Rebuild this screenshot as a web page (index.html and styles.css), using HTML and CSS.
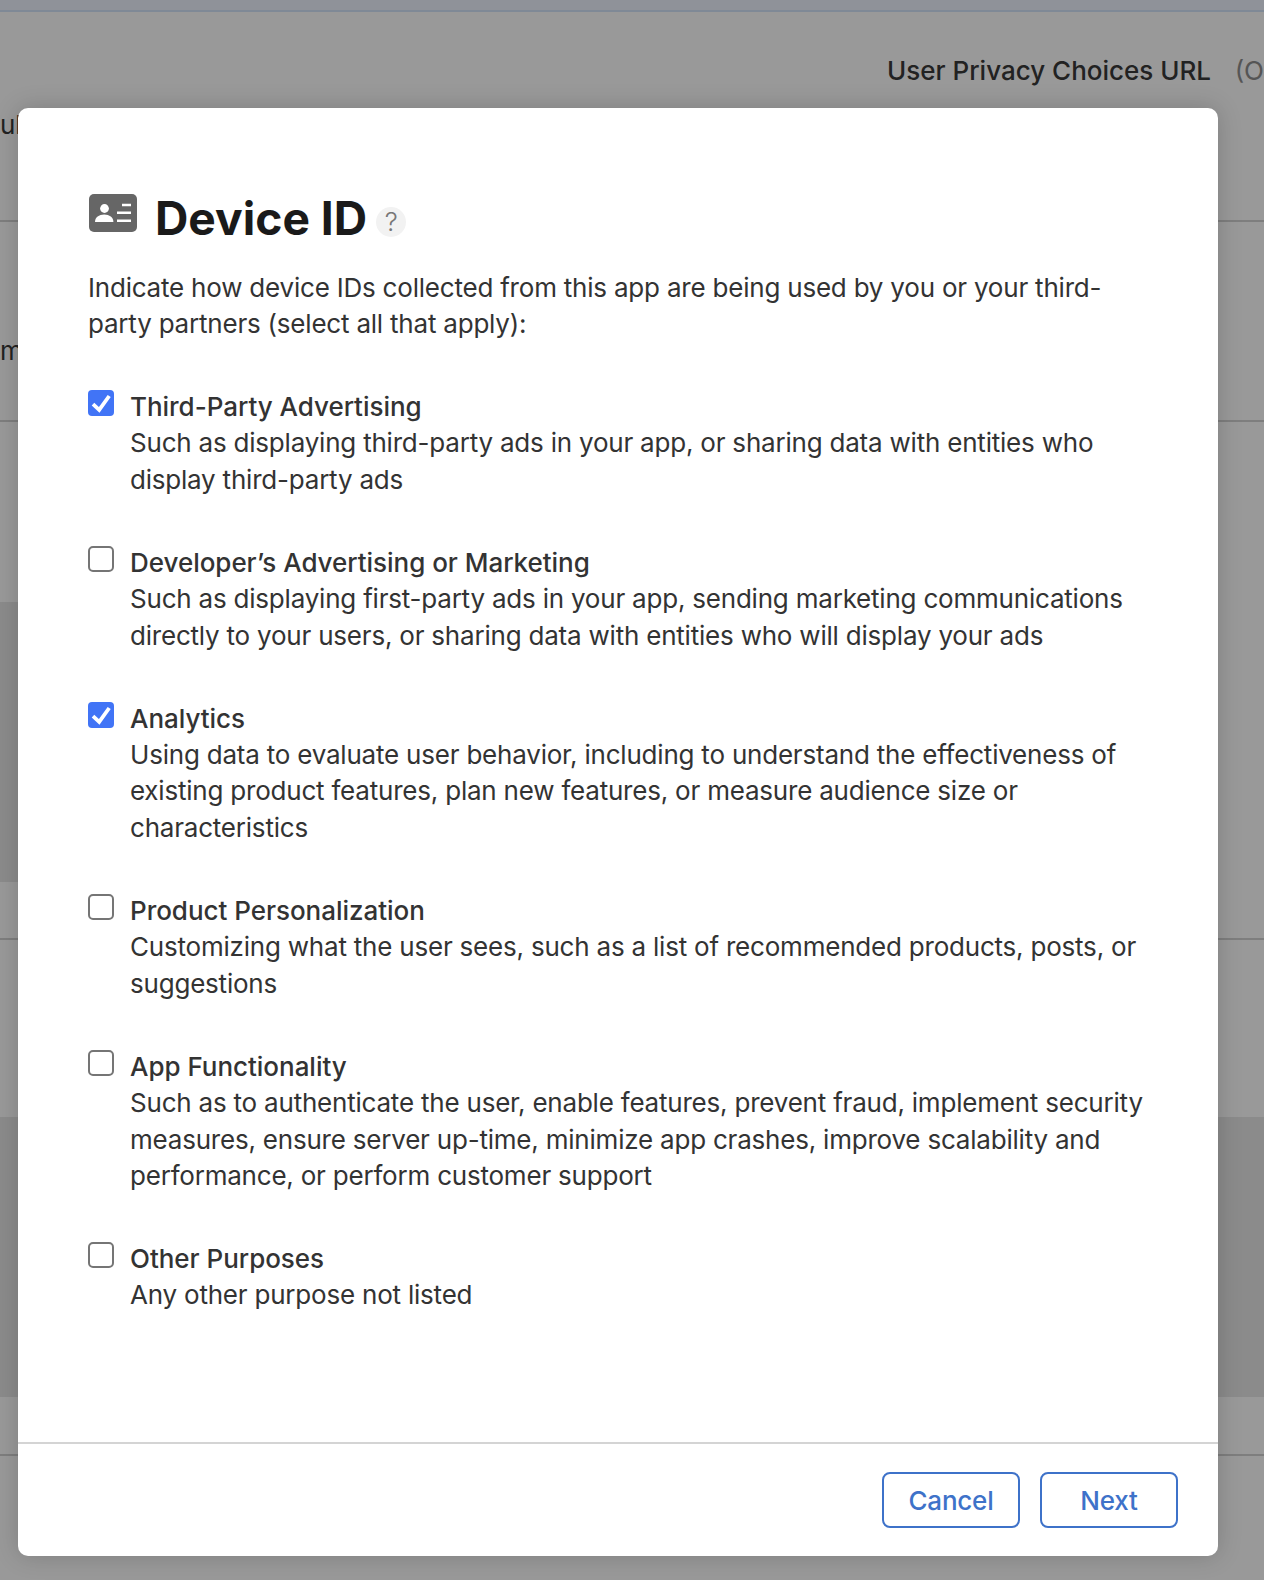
FILE: index.html
```html
<!DOCTYPE html>
<html lang="en">
<head>
    <meta charset="UTF-8">
    <meta name="viewport" content="width=device-width, initial-scale=1.0">
    <title>Device ID</title>
    <link rel="stylesheet" href="styles.css">
</head>
<body>
    <!-- Page behind the dialog -->
    <div class="page">
        <div class="top-bar"></div>
        <div class="row row-first">
            <span class="cut-label">ul</span>
            <span class="field-label">User Privacy Choices URL</span>
            <span class="field-optional">(O</span>
        </div>
        <div class="row row-second">
            <span class="cut-label">m</span>
        </div>
        <div class="row row-third">
            <div class="band band-left"></div>
        </div>
        <div class="row row-fourth">
            <div class="band"></div>
        </div>
    </div>

    <div class="backdrop">
        <div class="modal">
            <div class="modal-body">
                <div class="modal-title">
                    <svg class="title-icon" viewBox="0 0 48 38" width="48" height="38">
                        <rect width="48" height="38" rx="5" fill="#666"/>
                        <circle cx="15.5" cy="14.5" r="4.4" fill="#fff"/>
                        <path d="M6 28c0-4.600 4-7.400 9.200-7.400s9.200 2.800 9.200 7.400z" fill="#fff"/>
                        <path d="M33 11h9M28 18.800h14M28 26.700h14" stroke="#fff" stroke-width="2.400" fill="none"/>
                    </svg>
                    <h1>Device ID</h1>
                    <span class="help">?</span>
                </div>
                <p class="intro">Indicate how device IDs collected from this app are being used by you or your third-party partners (select all that apply):</p>

                <label class="option">
                    <span class="box checked">
                        <svg viewBox="0 0 26 26" width="26" height="26"><path d="M5 14.200l6.200 5.600L21.200 6" stroke="#fff" stroke-width="3.800" fill="none"/></svg>
                    </span>
                    <span class="option-text">
                        <span class="option-name">Third-Party Advertising</span>
                        Such as displaying third-party ads in your app, or sharing data with entities who display third-party ads
                    </span>
                </label>

                <label class="option">
                    <span class="box"></span>
                    <span class="option-text">
                        <span class="option-name">Developer’s Advertising or Marketing</span>
                        Such as displaying first-party ads in your app, sending marketing communications directly to your users, or sharing data with entities who will display your ads
                    </span>
                </label>

                <label class="option">
                    <span class="box checked">
                        <svg viewBox="0 0 26 26" width="26" height="26"><path d="M5 14.200l6.200 5.600L21.200 6" stroke="#fff" stroke-width="3.800" fill="none"/></svg>
                    </span>
                    <span class="option-text">
                        <span class="option-name">Analytics</span>
                        Using data to evaluate user behavior, including to understand the effectiveness of existing product features, plan new features, or measure audience size or characteristics
                    </span>
                </label>

                <label class="option">
                    <span class="box"></span>
                    <span class="option-text">
                        <span class="option-name">Product Personalization</span>
                        Customizing what the user sees, such as a list of recommended products, posts, or suggestions
                    </span>
                </label>

                <label class="option">
                    <span class="box"></span>
                    <span class="option-text">
                        <span class="option-name">App Functionality</span>
                        Such as to authenticate the user, enable features, prevent fraud, implement security measures, ensure server up-time, minimize app crashes, improve scalability and performance, or perform customer support
                    </span>
                </label>

                <label class="option">
                    <span class="box"></span>
                    <span class="option-text">
                        <span class="option-name">Other Purposes</span>
                        Any other purpose not listed
                    </span>
                </label>
            </div>
            <div class="modal-footer">
                <button class="btn">Cancel</button>
                <button class="btn">Next</button>
            </div>
        </div>
    </div>
</body>
</html>
```

FILE: styles.css
```css
html, body {
    margin: 0;
    padding: 0;
    height: 1580px;
    overflow: hidden;
}
body {
    position: relative;
    font-family: Inter, "Noto Sans", sans-serif;
    font-size: 26px;
    line-height: 36.3px;
    letter-spacing: -0.21px;
    color: #333;
    background: #fff;
}
.top-bar {
    height: 10px;
    background: #eef4ff;
    border-bottom: 2px solid #d4e4fa;
}
.row {
    box-sizing: border-box;
    border-bottom: 2px solid #d2d2d2;
    position: relative;
}
.row-first {
    height: 210px;
    padding-top: 41px;
    display: flex;
    white-space: nowrap;
    letter-spacing: 0;
}
.row-second {
    height: 200px;
    padding-top: 111px;
}
.row-third {
    height: 518px;
    padding-top: 180px;
}
.row-fourth {
    height: 516px;
    padding-top: 177px;
}
.row-first .cut-label {
    margin-top: 54px;
    width: 888px;
}
.cut-label {
    color: #393939;
}
.field-label {
    width: 348px;
    color: #393939;
    font-weight: 500;
}
.field-optional {
    color: #8e8e8e;
}
.band {
    height: 280px;
    background: #e8e8e8;
}
.band-left {
    width: 60px;
}
.backdrop {
    position: absolute;
    top: 0;
    left: 0;
    right: 0;
    bottom: 0;
    background: rgba(0,0,0,0.4);
    padding: 108px 46px 0 18px;
}
.modal {
    box-sizing: border-box;
    width: 1200px;
    height: 1448px;
    background: #fff;
    border-radius: 10px;
    box-shadow: 0 0 24px rgba(0,0,0,0.18);
    display: flex;
    flex-direction: column;
}
.modal-body {
    flex: 1;
    padding: 78px 62px 0 70px;
}
.modal-title {
    display: flex;
    align-items: flex-start;
    height: 56px;
}
.title-icon {
    margin: 8px 18px 0 1px;
    flex-shrink: 0;
}
h1 {
    margin: 4px 0 0;
    font-size: 46.200px;
    line-height: 56px;
    font-weight: 700;
    letter-spacing: 0;
    color: #1a1a1a;
}
.help {
    width: 30px;
    height: 30px;
    margin: 21px 0 0 9px;
    border-radius: 50%;
    background: #f2f2f2;
    color: #777;
    font-size: 26px;
    font-weight: 300;
    line-height: 30px;
    text-align: center;
}
.intro {
    margin: 27.500px 0 47px;
}
.option {
    display: flex;
    gap: 16px;
    margin-bottom: 47px;
}
.box {
    box-sizing: border-box;
    flex-shrink: 0;
    width: 26px;
    height: 26px;
    margin-top: 1px;
    border: 2px solid #757575;
    border-radius: 5px;
}
.box.checked {
    border: none;
    background: #4174f6;
    border-radius: 4px;
}
.box svg {
    display: block;
}
.option-name {
    display: block;
    font-weight: 500;
    letter-spacing: -0.03px;
}
.modal-footer {
    display: flex;
    justify-content: flex-end;
    gap: 20px;
    height: 114px;
    box-sizing: border-box;
    padding: 28px 40px;
    border-top: 2px solid #d4d4d4;
}
.btn {
    box-sizing: border-box;
    width: 138px;
    height: 56px;
    border: 2px solid #3e72c9;
    border-radius: 8px;
    background: #fff;
    color: #3e72c9;
    font-family: inherit;
    font-size: 26px;
    font-weight: 500;
    letter-spacing: -0.21px;
}
```
